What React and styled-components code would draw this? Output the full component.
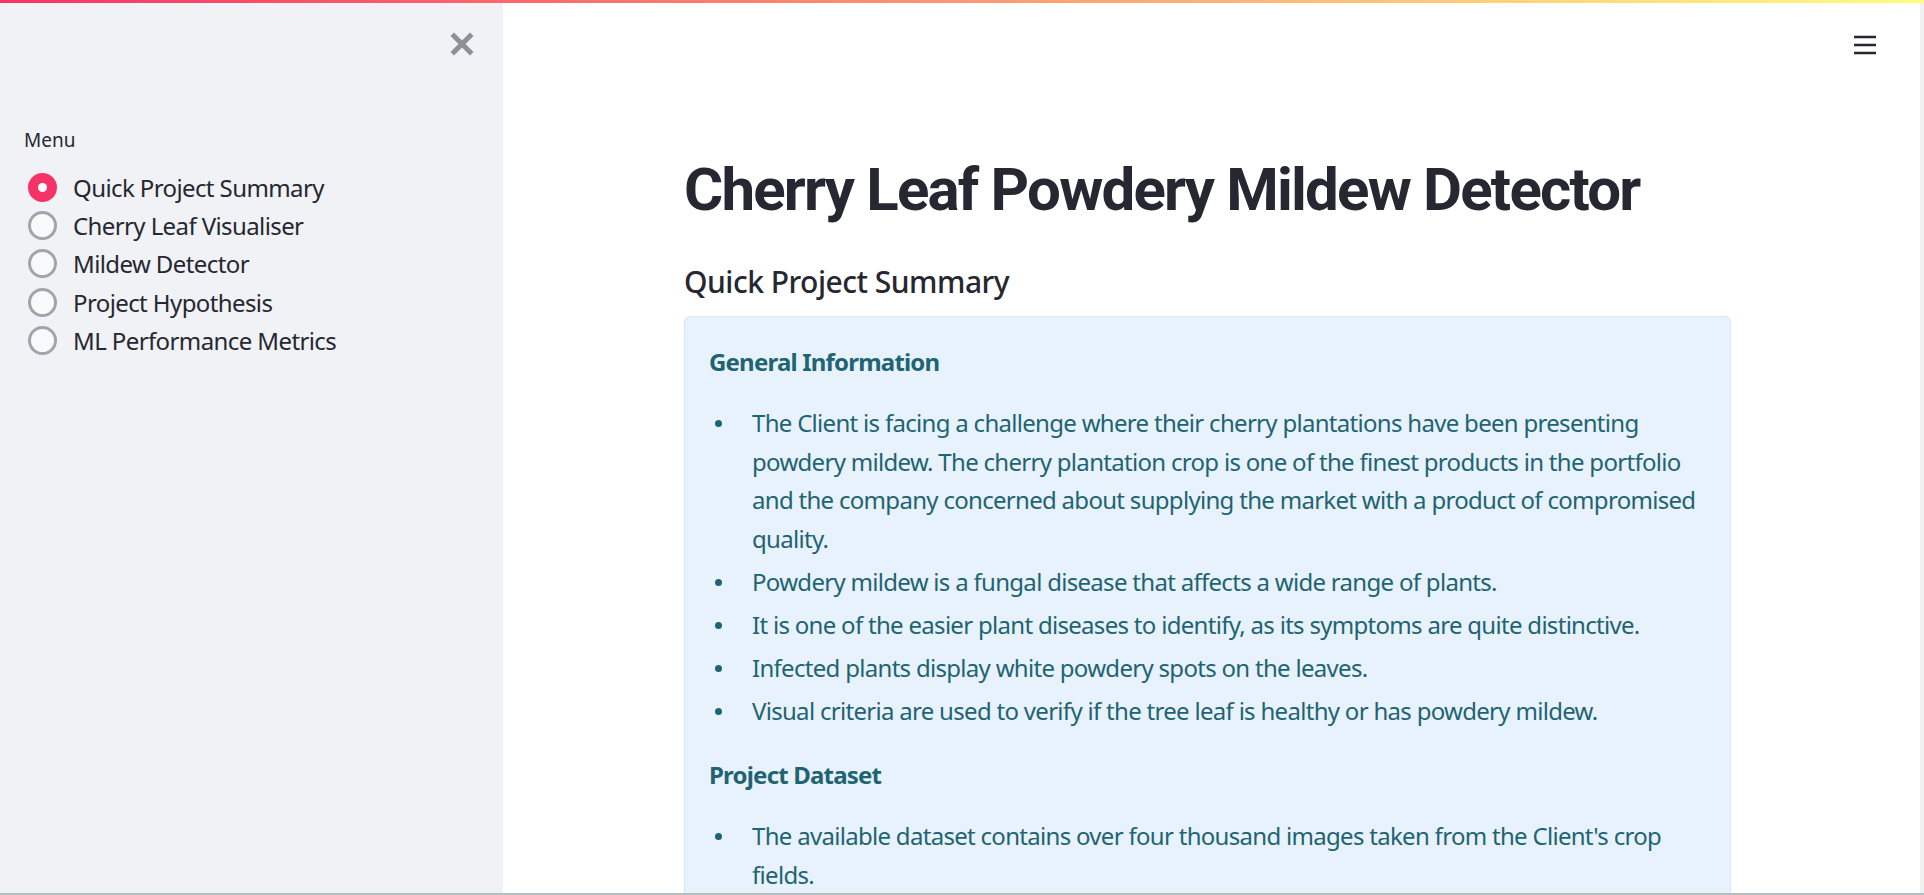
import styled, { createGlobalStyle } from 'styled-components';

const GlobalStyle = createGlobalStyle`
  html, body {
    margin: 0;
    padding: 0;
    background: #ffffff;
  }
  body {
    font-family: "Noto Sans", "Open Sans", sans-serif;
    color: #262730;
    overflow: hidden;
  }
  * { box-sizing: border-box; }
`;

const Page = styled.div`
  position: relative;
  display: flex;
  width: 1924px;
  height: 895px;
  overflow: hidden;
  border-bottom: 2px solid #b4bdc2;
`;

const Decoration = styled.div`
  position: absolute;
  top: 0;
  left: 0;
  right: 0;
  height: 3px;
  background: linear-gradient(90deg, #f63366, #fffd80);
  z-index: 5;
`;

const Sidebar = styled.aside`
  width: 503px;
  flex-shrink: 0;
  background: #f0f2f6;
  padding: 24px 24px 0 24px;
  display: flex;
  flex-direction: column;
`;

const CloseRow = styled.div`
  display: flex;
  justify-content: flex-end;
  padding-right: 5px;
  height: 40px;
  align-items: center;
`;

const Label = styled.div`
  margin-top: 63px;
  font-size: 19px;
  color: #262730;
  margin-bottom: 15px;
`;

const RadioList = styled.div`
  display: flex;
  flex-direction: column;
  padding-left: 4px;
`;

const RadioRow = styled.div`
  display: flex;
  align-items: center;
  height: 38.4px;
  gap: 16px;
  font-size: 24px;
  letter-spacing: -0.6px;
  color: #262730;
`;

const RadioCircle = styled.span`
  width: 29px;
  height: 29px;
  border-radius: 50%;
  flex-shrink: 0;
  display: flex;
  align-items: center;
  justify-content: center;
  background: ${p => (p.$active ? '#f63366' : '#f8f9fb')};
  border: ${p => (p.$active ? 'none' : '3px solid #a3a4aa')};

  &::after {
    content: '';
    display: ${p => (p.$active ? 'block' : 'none')};
    width: 9px;
    height: 9px;
    border-radius: 50%;
    background: #ffffff;
  }
`;

const Main = styled.main`
  flex: 1;
  display: flex;
  flex-direction: column;
  padding-right: 8px;
  min-width: 0;
`;

const ScrollStrip = styled.div`
  width: 4px;
  flex-shrink: 0;
  background: #f1f1f1;
`;

const Header = styled.div`
  height: 90px;
  flex-shrink: 0;
  display: flex;
  justify-content: flex-end;
  align-items: center;
  padding-right: 36px;
`;

const Block = styled.div`
  width: 1047px;
  flex-shrink: 0;
  margin: 0 auto;
  padding-top: 60px;
`;

const Title = styled.h1`
  margin: 0 0 35px 0;
  font-family: Roboto, "Noto Sans", sans-serif;
  font-size: 60px;
  font-weight: 700;
  line-height: 79px;
  color: #262730;
  letter-spacing: -1.8px;
  white-space: nowrap;
`;

const Subtitle = styled.h3`
  margin: 0 0 16px 0;
  font-size: 30px;
  font-weight: 500;
  line-height: 36px;
  letter-spacing: -0.5px;
  color: #262730;
`;

const InfoBox = styled.div`
  background: #e8f2fc;
  border: 1px solid #d6e7f8;
  border-radius: 6px;
  padding: 26px 24px 24px 24px;
  color: #1e6472;
  font-size: 24px;
  line-height: 38.4px;
  letter-spacing: -0.7px;
`;

const Heading = styled.p`
  margin: 0 0 23px 0;
  font-weight: 700;
  letter-spacing: -0.8px;
`;

const List = styled.ul`
  list-style: none;
  margin: 0 0 25px 0;
  padding: 0;
`;

const Item = styled.li`
  display: flex;
  margin: 4.8px 0;
`;

const Bullet = styled.span`
  width: 43px;
  flex-shrink: 0;
  display: flex;
  padding-left: 6px;
  padding-top: 16px;

  &::before {
    content: '';
    width: 7px;
    height: 7px;
    border-radius: 50%;
    background: #1e6472;
  }
`;

const Icon = styled.svg`
  display: block;
`;

const general = [
  'The Client is facing a challenge where their cherry plantations have been presenting powdery mildew. The cherry plantation crop is one of the finest products in the portfolio and the company concerned about supplying the market with a product of compromised quality.',
  'Powdery mildew is a fungal disease that affects a wide range of plants.',
  'It is one of the easier plant diseases to identify, as its symptoms are quite distinctive.',
  'Infected plants display white powdery spots on the leaves.',
  'Visual criteria are used to verify if the tree leaf is healthy or has powdery mildew.',
];

const dataset = [
  "The available dataset contains over four thousand images taken from the Client's crop fields.",
  'The images show cherry leaves that are healthy and cherry leaves that have powdery mildew.',
];

const pages = [
  'Quick Project Summary',
  'Cherry Leaf Visualiser',
  'Mildew Detector',
  'Project Hypothesis',
  'ML Performance Metrics',
];

export default function App() {
  return (
    <>
      <GlobalStyle />
      <Page>
        <Decoration />
        <Sidebar>
          <CloseRow>
            <Icon width="24" height="24" viewBox="0 0 24 24">
              <path d="M4 4 L20 20 M20 4 L4 20" stroke="#8f9096" strokeWidth="5" strokeLinecap="square" />
            </Icon>
          </CloseRow>
          <Label>Menu</Label>
          <RadioList>
            {pages.map((p, i) => (
              <RadioRow key={p}>
                <RadioCircle $active={i === 0} />
                {p}
              </RadioRow>
            ))}
          </RadioList>
        </Sidebar>
        <Main>
          <Header>
            <Icon width="22" height="20" viewBox="0 0 22 20">
              <path d="M0 2 H22 M0 10 H22 M0 18 H22" stroke="#262730" strokeWidth="2.6" />
            </Icon>
          </Header>
          <Block>
            <Title>Cherry Leaf Powdery Mildew Detector</Title>
            <Subtitle>Quick Project Summary</Subtitle>
            <InfoBox>
              <Heading>General Information</Heading>
              <List>
                {general.map(t => (
                  <Item key={t}><Bullet />{t}</Item>
                ))}
              </List>
              <Heading>Project Dataset</Heading>
              <List>
                {dataset.map(t => (
                  <Item key={t}><Bullet />{t}</Item>
                ))}
              </List>
            </InfoBox>
          </Block>
        </Main>
        <ScrollStrip />
      </Page>
    </>
  );
}
